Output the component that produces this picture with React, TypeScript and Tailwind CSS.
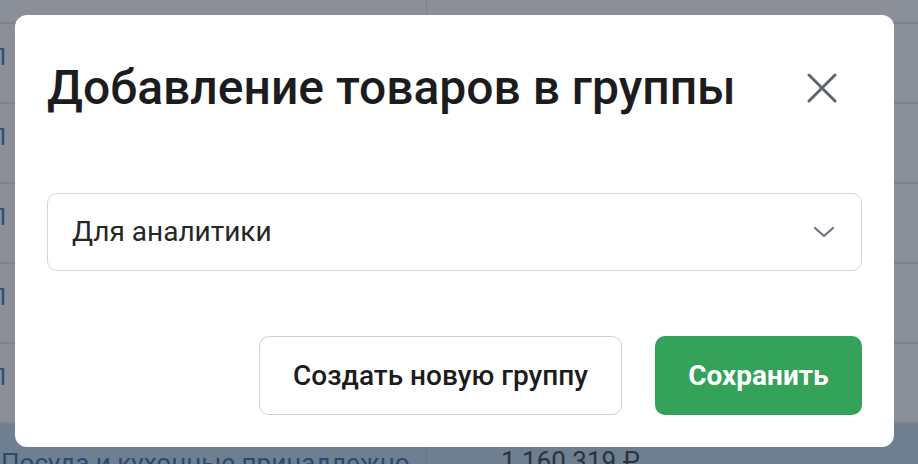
import React from "react";

const rows = [0, 1, 2, 3, 4];

export default function App() {
  return (
    <div
      className="relative w-[918px] h-[464px] overflow-hidden bg-[#8b8f98]"
      style={{ fontFamily: "Roboto, 'Noto Sans', sans-serif" }}
    >
      {/* background table */}
      <div className="flex flex-col">
        <div className="h-[24px] flex border-b-2 border-[#7f838c]">
          <div className="w-[427px] border-r border-[#7f838c]" />
          <div className="flex-1" />
        </div>
        {rows.map((r) => (
          <div key={r} className="h-[80px] flex border-b-2 border-[#7f838c]">
            <div className="w-[427px] border-r border-[#7f838c] flex items-center overflow-hidden">
              <span className="text-[24px] text-[#2e4f78] -ml-[11px] mt-[-12px]">П</span>
            </div>
            <div className="flex-1" />
          </div>
        ))}
        <div className="h-[40px] flex bg-[#6d7f91]">
          <div className="w-[427px] border-r border-[#667789] pt-[26px] pl-[1px] text-[26px] leading-none text-[#2a4a70] whitespace-nowrap overflow-hidden">
            Посуда и кухонные принадлежно
          </div>
          <div className="flex-1 pt-[24px] pl-[74px] text-[26px] leading-none text-[#2c323a] whitespace-nowrap">1 160 319 ₽</div>
        </div>
      </div>

      {/* dialog */}
      <div className="absolute left-[15px] top-[15px] w-[879px] h-[432px] bg-white rounded-[12px] px-[32px] pt-[46px]">
        <div className="flex items-center justify-between">
          <h1 className="text-[48px] leading-[54px] font-medium text-[#1c1c1e] whitespace-nowrap">
            Добавление товаров в группы
          </h1>
          <button className="w-[30px] h-[30px] mr-[25px] flex items-center justify-center text-[#5f6570]">
            <svg width="30" height="30" viewBox="0 0 30 30" fill="none" stroke="currentColor" strokeWidth="3" strokeLinecap="round">
              <path d="M2 2 L28 28 M28 2 L2 28" />
            </svg>
          </button>
        </div>

        <div className="mt-[78px] h-[78px] border-[1.5px] border-[#d3d6db] rounded-[10px] flex items-center justify-between pl-[24px] pr-[26px]">
          <span className="text-[28px] text-[#262626]">Для аналитики</span>
          <svg width="22" height="14" viewBox="0 0 22 14" fill="none" stroke="#6b717a" strokeWidth="2.2" strokeLinecap="round" strokeLinejoin="round">
            <path d="M2 3 L11 11 L20 3" />
          </svg>
        </div>

        <div className="mt-[65px] flex justify-end gap-[33px]">
          <button className="w-[363px] h-[79px] border-[1.5px] border-[#cfd3d8] rounded-[10px] bg-white text-[28px] font-medium text-[#1c1c1e]">
            Создать новую группу
          </button>
          <button className="w-[207px] h-[79px] rounded-[10px] bg-[#34a259] text-[28px] font-bold text-white">
            Сохранить
          </button>
        </div>
      </div>
    </div>
  );
}
